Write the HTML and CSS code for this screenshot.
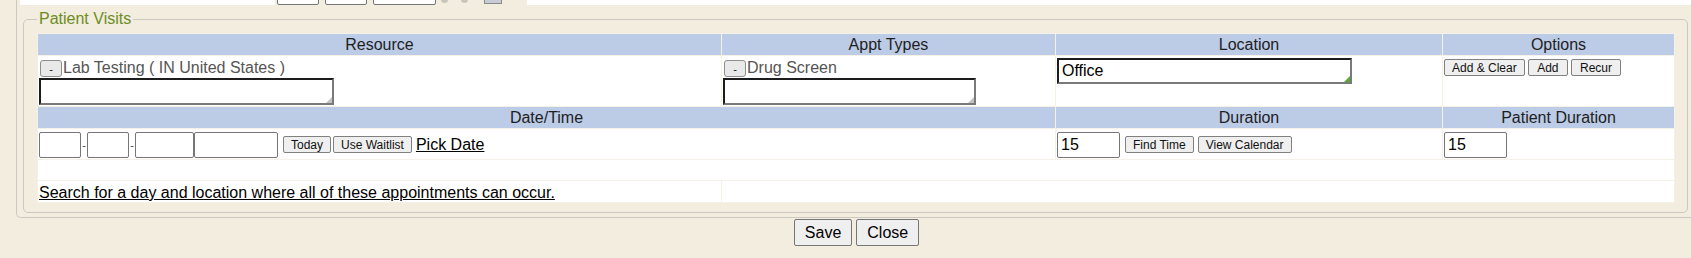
FILE: index.html
```html
<!DOCTYPE html>
<html lang="en">
<head>
    <meta charset="UTF-8">
    <title>Patient Visits</title>
    <link rel="stylesheet" href="styles.css">
</head>
<body>
    <div class="panel">
        <div class="prev-row">
            <div class="prev-cell first"></div>
            <div class="prev-tools">
                <span class="stub w42"></span>
                <span class="stub w42 next"></span>
                <span class="stub w63 next"></span>
                <span class="dot"></span>
                <span class="dot second"></span>
                <span class="cal"></span>
            </div>
            <div class="prev-cell rest"></div>
        </div>
        <fieldset class="visits">
            <legend>Patient Visits</legend>
            <table class="visit-table">
                <colgroup>
                    <col class="c-res">
                    <col class="c-appt">
                    <col class="c-loc">
                    <col class="c-opt">
                </colgroup>
                <tr class="head">
                    <th>Resource</th>
                    <th>Appt Types</th>
                    <th>Location</th>
                    <th>Options</th>
                </tr>
                <tr class="picks">
                    <td>
                        <div class="picked"><button class="mini">-</button>Lab Testing ( IN United States )</div>
                        <div class="pickbox res"></div>
                    </td>
                    <td>
                        <div class="picked"><button class="mini">-</button>Drug Screen</div>
                        <div class="pickbox appt"></div>
                    </td>
                    <td>
                        <div class="pickbox office">Office</div>
                    </td>
                    <td class="opts">
                        <button class="small">Add &amp; Clear</button>
                        <button class="small">Add</button>
                        <button class="small">Recur</button>
                    </td>
                </tr>
                <tr class="head">
                    <th colspan="2">Date/Time</th>
                    <th>Duration</th>
                    <th>Patient Duration</th>
                </tr>
                <tr class="when">
                    <td colspan="2">
                        <div class="date-line">
                            <input class="field w42" type="text"><span class="dash">-</span><input class="field w42" type="text"><span class="dash">-</span><input class="field w59" type="text"><input class="field w84" type="text">
                            <button class="small gap">Today</button><button class="small tight">Use Waitlist</button>
                            <a href="#" class="link">Pick Date</a>
                        </div>
                    </td>
                    <td>
                        <div class="date-line">
                            <input class="field w63" type="text" value="15">
                            <button class="small gap">Find Time</button>
                            <button class="small loose">View Calendar</button>
                        </div>
                    </td>
                    <td>
                        <div class="date-line">
                            <input class="field w63" type="text" value="15">
                        </div>
                    </td>
                </tr>
                <tr class="spacer">
                    <td colspan="4"></td>
                </tr>
                <tr class="search">
                    <td><a href="#" class="link">Search for a day and location where all of these appointments can occur.</a></td>
                    <td colspan="3"></td>
                </tr>
            </table>
        </fieldset>
    </div>
    <div class="actions">
        <button class="big">Save</button>
        <button class="big">Close</button>
    </div>
</body>
</html>
```

FILE: styles.css
```css
body {
    margin: 0;
    background-color: #f3ede0;
    font-family: "Liberation Sans", Arial, sans-serif;
    font-size: 16px;
    color: #1e1e1e;
    overflow: hidden;
}

.panel {
    margin: 0 -20px 0 16px;
    padding: 0 20px 4px 3px;
    border-left: 1px solid #cbc8c2;
    border-bottom: 1px solid #cbc8c2;
    border-bottom-left-radius: 5px;
}

/* bottom edge of the section above, cut off by the screenshot */
.prev-row {
    display: flex;
    height: 5px;
    overflow: hidden;
}

.prev-cell {
    background-color: #fff;
}

.prev-cell.first {
    width: 255px;
}

.prev-cell.rest {
    flex: 1;
}

.prev-tools {
    display: flex;
    align-items: flex-start;
    width: 250px;
    padding-left: 2px;
}

.stub {
    display: block;
    height: 12px;
    margin-top: -9px;
    border: 1px solid #767676;
    border-radius: 2px;
    background-color: #fff;
}

.stub.next {
    margin-left: 6px;
}

.stub.w42 {
    width: 40px;
}

.stub.w63 {
    width: 61px;
}

.dot {
    display: block;
    width: 7px;
    height: 7px;
    margin: -4px 0 0 5px;
    border-radius: 50%;
    background-color: #c9c4bb;
}

.dot.second {
    margin-left: 13px;
}

.cal {
    display: block;
    width: 16px;
    height: 3px;
    margin-left: 16px;
    border: 1px solid #8a8a8a;
    border-top: none;
    background-color: #c7cbd6;
}

.visits {
    margin: 5px 3px 0 3px;
    padding: 5px 12px 9px 13px;
    border: 1px solid #cbc8c2;
    border-radius: 5px;
    min-width: 0;
}

.visits legend {
    padding: 0 2px;
    color: #6b8c1f;
}

.visit-table {
    width: 100%;
    border-spacing: 1px;
    background-color: #f6f1e7;
    table-layout: fixed;
}

.c-res {
    width: 683px;
}

.c-appt {
    width: 333px;
}

.c-loc {
    width: 386px;
}

.head th {
    height: 21px;
    padding: 0 4px;
    background-color: #bccbe6;
    font-weight: normal;
    color: #1e1e1e;
    line-height: 21px;
}

td {
    background-color: #fff;
    padding: 0 1px;
}

.picks td {
    vertical-align: top;
    padding-top: 2px;
    padding-bottom: 1px;
}

.picked {
    display: flex;
    align-items: center;
    height: 20px;
    color: #555;
}

.mini {
    width: 22px;
    height: 17px;
    margin: 1px 1px 0 1px;
    padding: 0;
    border: 1px solid #8f8f8f;
    border-radius: 3px;
    background-color: #e9e9e9;
    font-family: "Liberation Sans", Arial, sans-serif;
    font-size: 11px;
    color: #111;
    line-height: 14px;
}

.pickbox {
    position: relative;
    height: 27px;
    box-sizing: border-box;
    border: 2px solid;
    border-color: #1c1c1c #7a7a7a #7a7a7a #1c1c1c;
    background-color: #fff;
}

.pickbox::after {
    content: "";
    position: absolute;
    right: 0;
    bottom: 0;
    border-left: 6px solid transparent;
    border-bottom: 6px solid #c3c3c3;
}

.pickbox.res {
    width: 295px;
}

.pickbox.appt {
    width: 253px;
}

.pickbox.office {
    width: 295px;
    height: 26px;
    padding-left: 3px;
    line-height: 22px;
    color: #000;
}

.pickbox.office::after {
    border-bottom-color: #5aa83c;
}

.opts {
    padding-top: 3px;
}

.small {
    height: 17px;
    padding: 0 7px;
    border: 1px solid #808080;
    border-radius: 2px;
    background-color: #efefef;
    font-family: "Liberation Sans", Arial, sans-serif;
    font-size: 12px;
    color: #111;
    vertical-align: middle;
}

.opts .small {
    margin: 0 -1px 0 0;
    padding: 0 8px;
}

.opts .small:first-child {
    padding: 0 7px;
}

.when td {
    height: 30px;
    vertical-align: middle;
}

.date-line {
    display: flex;
    align-items: center;
    padding-top: 1px;
}

.field {
    height: 26px;
    box-sizing: border-box;
    padding: 1px 3px;
    border: 1px solid #767676;
    border-radius: 2px;
    background-color: #fff;
    font-family: "Liberation Sans", Arial, sans-serif;
    font-size: 16px;
    color: #000;
}

.field.w42 {
    width: 42px;
}

.field.w59 {
    width: 59px;
}

.field.w84 {
    width: 84px;
}

.field.w63 {
    width: 63px;
}

.dash {
    width: 6px;
    text-align: center;
    font-size: 11px;
    color: #444;
}

.small.gap {
    margin-left: 5px;
}

.small.tight {
    margin-left: 2px;
}

.small.loose {
    margin-left: 4px;
}

.date-line .link {
    margin-left: 4px;
}

.link {
    color: #000;
    text-decoration: underline;
}

.spacer td {
    height: 20px;
}

.search td {
    height: 21px;
    vertical-align: bottom;
}

.actions {
    display: flex;
    justify-content: center;
    gap: 4px;
    padding: 1px 0 0 22px;
}

.big {
    height: 27px;
    padding: 0 10px;
    border: 1px solid #767676;
    border-radius: 2px;
    background-color: #efefef;
    font-family: "Liberation Sans", Arial, sans-serif;
    font-size: 16px;
    color: #000;
}
```
